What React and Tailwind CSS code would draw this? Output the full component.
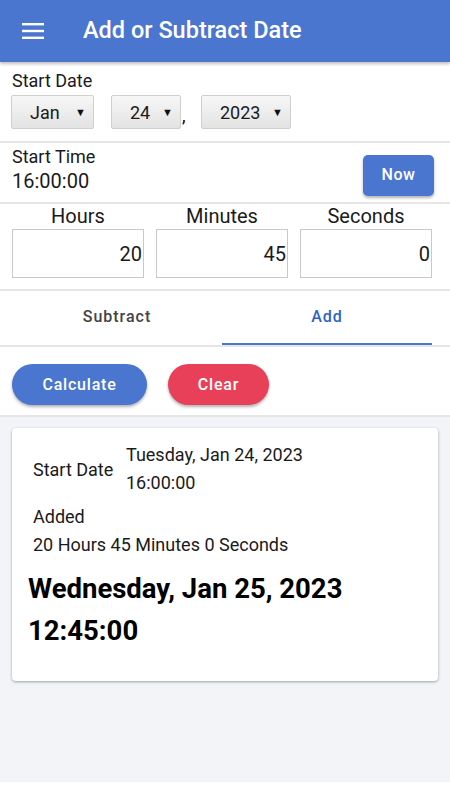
import React, { useState } from 'react';

const Select = ({ value, className = '' }) => (
  <div
    className={`h-[34px] flex items-center justify-between border border-[#cfcfcf] rounded-[2px] bg-gradient-to-b from-[#f7f7f7] to-[#e3e3e3] pl-[18px] pr-[7px] text-[18px] text-[#1a1a1a] ${className}`}
  >
    <span>{value}</span>
    <span className="text-[11px] leading-none text-[#111]">▼</span>
  </div>
);

const NumberBox = ({ label, value }) => (
  <div className="flex flex-col items-stretch">
    <div className="text-center text-[20px] leading-[24px] text-[#1a1a1a]">{label}</div>
    <div className="mt-[1px] h-[49px] border border-[#c9c9c9] flex items-center justify-end px-[1px] text-[20px] text-[#1a1a1a]">
      {value}
    </div>
  </div>
);

export default function App() {
  const [tab, setTab] = useState('add');

  return (
    <div className="w-[450px] min-h-[800px] bg-white font-['Roboto',sans-serif]">
      {/* app bar */}
      <div className="h-[62px] bg-[#4a76cf] flex items-center shadow-[0_2px_3px_rgba(0,0,0,0.25)] relative z-10">
        <svg width="22" height="16" viewBox="0 0 22 16" className="ml-[22px]">
          <rect x="0" y="0" width="22" height="2.4" fill="#fff" />
          <rect x="0" y="6.8" width="22" height="2.4" fill="#fff" />
          <rect x="0" y="13.6" width="22" height="2.4" fill="#fff" />
        </svg>
        <div className="ml-[39px] text-white text-[23.5px] font-medium">Add or Subtract Date</div>
      </div>

      {/* start date */}
      <div className="px-[11px] pt-[8px] pb-[12px] border-b-2 border-[#e6e6e6]">
        <div className="text-[18px] leading-[22px] text-[#1a1a1a] pl-[1px]">Start Date</div>
        <div className="flex items-end mt-[3px]">
          <Select value="Jan" className="w-[83px]" />
          <Select value="24" className="w-[70px] ml-[17px]" />
          <span className="text-[18px] leading-none mb-[4px] ml-[1px] w-[19px]">,</span>
          <Select value="2023" className="w-[90px]" />
        </div>
      </div>

      {/* start time */}
      <div className="flex items-center justify-between pl-[12px] pr-[16px] h-[61px] border-b-2 border-[#e6e6e6]">
        <div className="-mt-[6px]">
          <div className="text-[18px] leading-[22px] text-[#1a1a1a]">Start Time</div>
          <div className="text-[20px] leading-[26px] text-[#1a1a1a]">16:00:00</div>
        </div>
        <button className="w-[71px] h-[41px] mt-[5px] bg-[#4a76cf] text-white rounded-[5px] text-[16px] font-medium tracking-[0.5px] shadow-[0_2px_3px_rgba(0,0,0,0.3)]">
          Now
        </button>
      </div>

      {/* duration */}
      <div className="grid grid-cols-3 gap-[12px] pl-[12px] pr-[18px] pb-[11px] border-b-2 border-[#e6e6e6]">
        <NumberBox label="Hours" value="20" />
        <NumberBox label="Minutes" value="45" />
        <NumberBox label="Seconds" value="0" />
      </div>

      {/* tabs */}
      <div className="flex h-[56px] pl-[12px] pr-[18px] border-b-2 border-[#e6e6e6]">
        <button
          onClick={() => setTab('subtract')}
          className={`flex-1 flex flex-col items-center text-[16px] font-medium tracking-[1px] ${tab === 'subtract' ? 'text-[#2f62c9]' : 'text-[#444]'}`}
        >
          <span className="flex-1 flex items-center">Subtract</span>
          <span className={`h-[2px] w-full ${tab === 'subtract' ? 'bg-[#4a76cf]' : 'bg-transparent'}`} />
        </button>
        <button
          onClick={() => setTab('add')}
          className={`flex-1 flex flex-col items-center text-[16px] font-medium tracking-[1px] ${tab === 'add' ? 'text-[#2f62c9]' : 'text-[#444]'}`}
        >
          <span className="flex-1 flex items-center">Add</span>
          <span className={`h-[2px] w-full ${tab === 'add' ? 'bg-[#4a76cf]' : 'bg-transparent'}`} />
        </button>
      </div>

      {/* actions */}
      <div className="flex items-center gap-[21px] px-[12px] pt-[17px] pb-[10px] border-b-2 border-[#e6e6e6]">
        <button className="w-[135px] h-[41px] rounded-full bg-[#4a76cf] text-white text-[16px] font-medium tracking-[0.8px] shadow-[0_2px_3px_rgba(0,0,0,0.3)]">
          Calculate
        </button>
        <button className="w-[101px] h-[41px] rounded-full bg-[#e9405a] text-white text-[16px] font-medium tracking-[0.8px] shadow-[0_2px_3px_rgba(0,0,0,0.3)]">
          Clear
        </button>
      </div>

      {/* result */}
      <div className="bg-[#f3f4f8] h-[365px] px-[12px] pt-[11px]">
        <div className="bg-white rounded-[4px] shadow-[0_1px_3px_rgba(0,0,0,0.35)] h-[253px] pl-[21px] pr-[12px] pt-[13px]">
          <div className="flex items-center">
            <div className="text-[18px] text-[#1a1a1a] w-[93px]">Start Date</div>
            <div className="text-[18px] leading-[28px] text-[#1a1a1a]">
              <div>Tuesday, Jan 24, 2023</div>
              <div>16:00:00</div>
            </div>
          </div>
          <div className="mt-[6px] text-[18px] leading-[28px] text-[#1a1a1a]">
            <div>Added</div>
            <div>20 Hours 45 Minutes 0 Seconds</div>
          </div>
          <div className="mt-[9px] -ml-[5px] text-[27.5px] leading-[42px] font-bold text-black">
            <div>Wednesday, Jan 25, 2023</div>
            <div>12:45:00</div>
          </div>
        </div>
      </div>
    </div>
  );
}
